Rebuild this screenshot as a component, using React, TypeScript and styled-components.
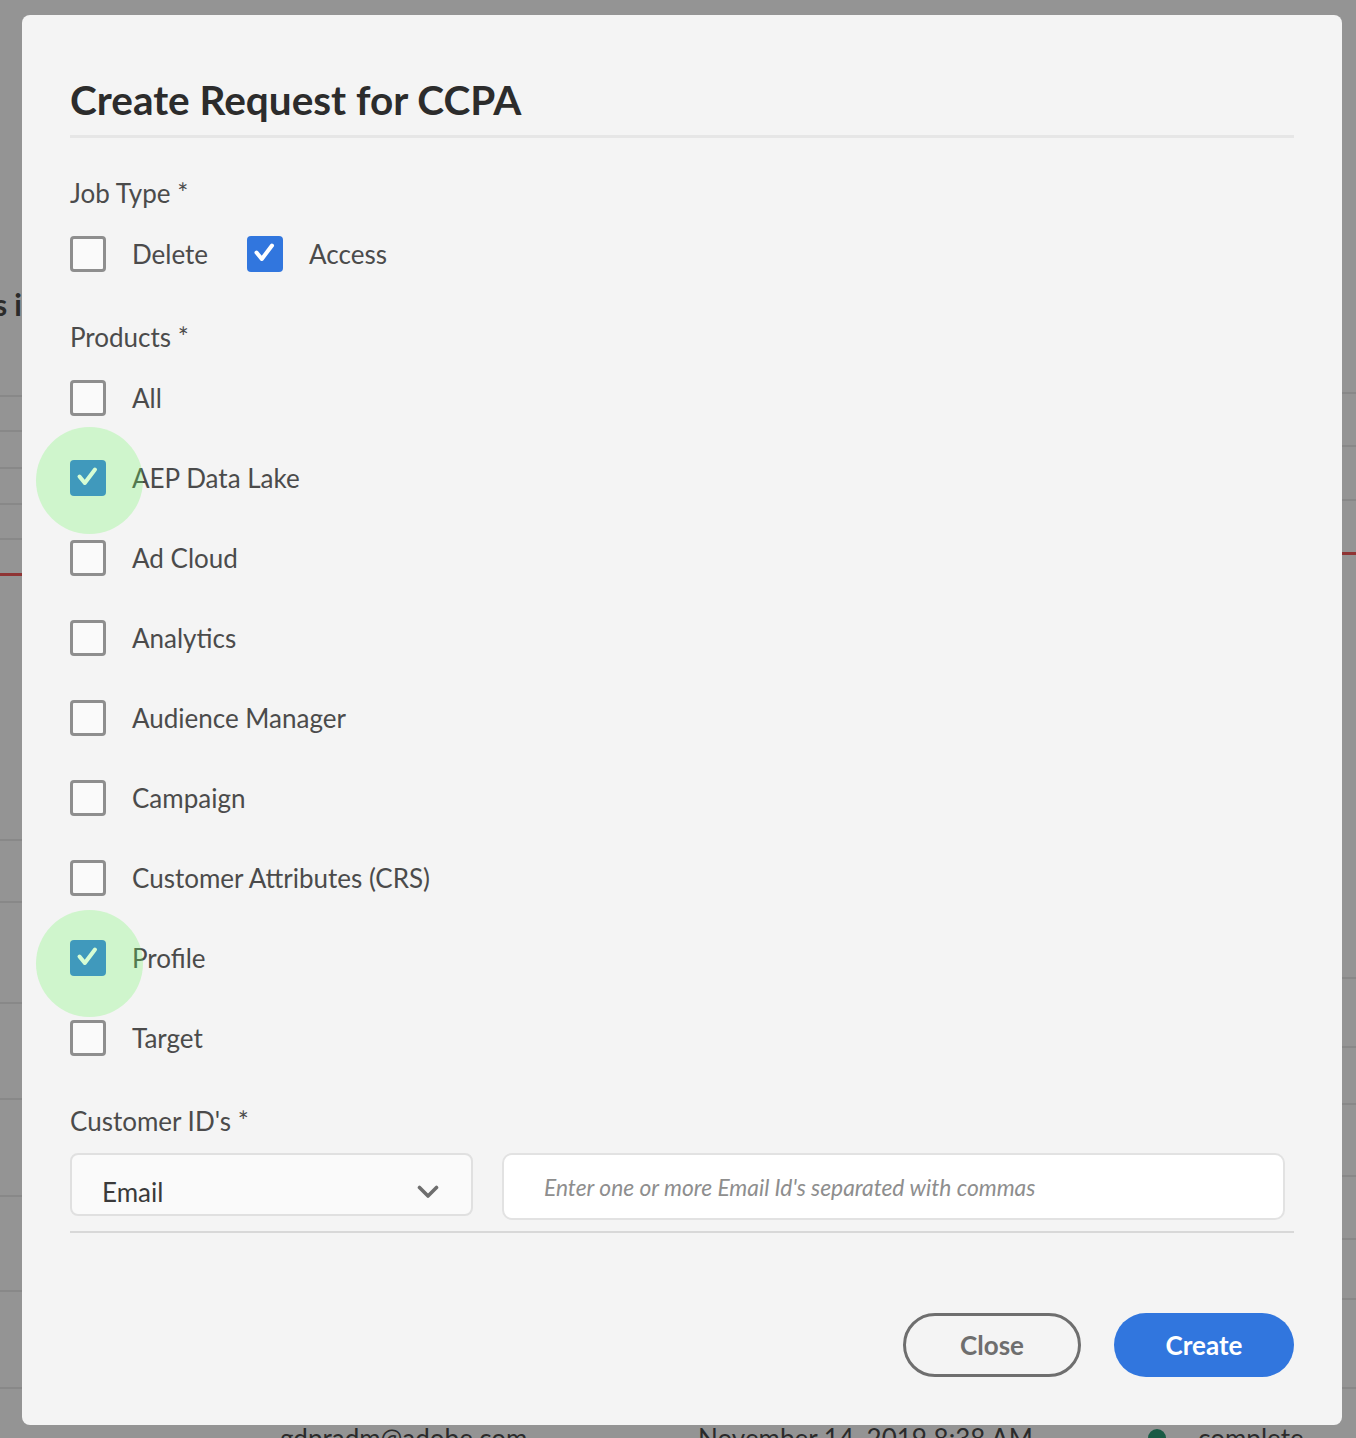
import React from "react";
import styled, { createGlobalStyle } from "styled-components";

const GlobalStyle = createGlobalStyle`
  html, body {
    margin: 0;
    padding: 0;
  }
  body {
    font-family: "Lato", "Liberation Sans", sans-serif;
    background: #ffffff;
    overflow: hidden;
  }
  * {
    box-sizing: border-box;
  }
`

// page behind the dialog (only its edges show through the overlay)
const Page = styled.div`
  width: 1356px;
  height: 1438px;
  overflow: hidden;
  display: flex;
  flex-direction: column;
`
const Panes = styled.div`
  display: flex;
  height: 1412px;
  flex-shrink: 0;
`
const Pane = styled.div<{ $width?: number }>`
  ${props => props.$width ? `width: ${props.$width}px;` : 'flex: 1;'}
  display: flex;
  flex-direction: column;
  overflow: hidden;
`
const PaneHeading = styled.div`
  height: 322px;
  display: flex;
  align-items: flex-end;
  justify-content: flex-end;
  white-space: nowrap;
  overflow: hidden;
  font-size: 30px;
  line-height: 36px;
  font-weight: 700;
  color: #4b4b4b;
  padding-right: 658px;
`
const PaneRow = styled.div<{ $h: number; $red?: boolean }>`
  height: ${props => props.$h}px;
  flex-shrink: 0;
  border-bottom: ${props => props.$red ? '3px solid #f65b5b' : '2px solid #eaeaea'};
`
const DataRow = styled.div`
  display: grid;
  grid-template-columns: 280px 418px 448px 1fr;
  align-items: center;
  padding-top: 10px;
  font-size: 26px;
  line-height: 32px;
  color: #4b4b4b;
`
const Status = styled.span`
  display: flex;
  align-items: center;
  gap: 32px;
  margin-left: 2px;
`
const Dot = styled.span`
  width: 18px;
  height: 18px;
  border-radius: 50%;
  background: #2d9d78;
`

// dialog
const Overlay = styled.div`
  position: fixed;
  inset: 0;
  background: rgba(0, 0, 0, 0.42);
  padding: 15px 14px 0 22px;
`
const Modal = styled.div`
  width: 1320px;
  height: 1410px;
  background: #f4f4f4;
  border-radius: 8px;
  padding: 61px 48px 48px;
  display: flex;
  flex-direction: column;
`
const Title = styled.h1`
  margin: 0;
  font-size: 40.5px;
  line-height: 48px;
  font-weight: 700;
  color: #2c2c2c;
`
const Divider = styled.div`
  height: 3px;
  margin-top: 11px;
  background: #e6e6e6;
`
const Label = styled.div<{ $gap: number }>`
  margin-top: ${props => props.$gap}px;
  font-size: 26px;
  line-height: 32px;
  color: #4b4b4b;
`
const InlineGroup = styled.div`
  margin-top: 27px;
  display: flex;
  align-items: center;
  gap: 39px;
`
const ProductList = styled.div`
  margin-top: 27px;
  display: flex;
  flex-direction: column;
  gap: 44px;
`
const Option = styled.label`
  position: relative;
  display: flex;
  align-items: center;
  gap: 26px;
  height: 36px;
  font-size: 26px;
  line-height: 32px;
  color: #4b4b4b;
`
const Box = styled.span<{ $checked: boolean }>`
  width: 36px;
  height: 36px;
  border-radius: 4px;
  display: flex;
  align-items: center;
  justify-content: center;
  background: ${props => props.$checked ? '#3176de' : '#fafafa'};
  border: ${props => props.$checked ? 'none' : '3px solid #8e8e8e'};
`
const Touch = styled.span<{ $top: number }>`
  position: absolute;
  left: -34px;
  top: ${props => props.$top}px;
  width: 107px;
  height: 107px;
  border-radius: 50%;
  background: rgba(109, 248, 96, 0.27);
  pointer-events: none;
`
const FieldRow = styled.div`
  margin-top: 16px;
  display: flex;
  align-items: flex-start;
  gap: 29px;
  padding-right: 9px;
`
const Select = styled.div`
  width: 403px;
  height: 63px;
  flex-shrink: 0;
  border: 2px solid #e0e0e0;
  border-radius: 8px;
  background: #fafafa;
  display: flex;
  align-items: center;
  justify-content: space-between;
  padding: 15px 32px 0 30px;
  font-size: 26px;
  color: #3a3a3a;
`
const TextInput = styled.input`
  flex: 1;
  height: 67px;
  border: 2px solid #e2e2e2;
  border-radius: 10px;
  background: #ffffff;
  padding: 0 0 0 40px;
  font-family: "Lato", "Liberation Sans", sans-serif;
  font-size: 22.8px;
  outline: none;

  &::placeholder {
    color: #8e8e8e;
    font-style: italic;
  }
`
const Rule = styled.div`
  height: 2px;
  margin-top: 11px;
  background: #d8d8d8;
`
const Footer = styled.div`
  margin-top: 80px;
  display: flex;
  justify-content: flex-end;
  gap: 33px;
`
const Button = styled.button<{ $primary?: boolean }>`
  height: 64px;
  width: ${props => props.$primary ? 180 : 178}px;
  border-radius: 32px;
  font-family: "Lato", "Liberation Sans", sans-serif;
  font-size: 26px;
  font-weight: 700;
  cursor: pointer;
  background: ${props => props.$primary ? '#3176de' : 'transparent'};
  color: ${props => props.$primary ? '#ffffff' : '#6e6e6e'};
  border: ${props => props.$primary ? 'none' : '3px solid #6e6e6e'};
`

const leftLines = [397, 432, 469, 505, 540, 576, 841, 903, 1004, 1100, 1197, 1292, 1389]
const rightLines = [394, 447, 501, 555, 979, 1048, 1105, 1177, 1240, 1300, 1389]

const toHeights = (lines: number[], start: number) =>
  lines.map((y, i) => y - (i === 0 ? start : lines[i - 1]))

const Check = () => (
  <svg width="36" height="36" viewBox="0 0 36 36">
    <path d="M9.5 16.5 L14.8 23 L25 9.5" fill="none" stroke="#ffffff" strokeWidth="4"
          strokeLinecap="round" strokeLinejoin="round"/>
  </svg>
)

const Chevron = () => (
  <svg width="22" height="14" viewBox="0 0 22 14">
    <path d="M2.5 2.5 L11 11 L19.5 2.5" fill="none" stroke="#6e6e6e" strokeWidth="3.6"
          strokeLinecap="round" strokeLinejoin="round"/>
  </svg>
)

type ProductType = { name: string, checked: boolean, touch?: number }

const products: ProductType[] = [
  {name: 'All', checked: false},
  {name: 'AEP Data Lake', checked: true, touch: -33},
  {name: 'Ad Cloud', checked: false},
  {name: 'Analytics', checked: false},
  {name: 'Audience Manager', checked: false},
  {name: 'Campaign', checked: false},
  {name: 'Customer Attributes (CRS)', checked: false},
  {name: 'Profile', checked: true, touch: -30},
  {name: 'Target', checked: false},
]

const Checkbox = ({name, checked, touch}: ProductType) => (
  <Option>
    <Box $checked={checked}>{checked && <Check/>}</Box>
    <span>{name}</span>
    {touch !== undefined && <Touch $top={touch}/>}
  </Option>
)

export default function App() {
  const leftHeights = toHeights(leftLines, 322)
  const rightHeights = toHeights(rightLines, 0)

  return (
    <>
      <GlobalStyle/>
      <Page>
        <Panes>
          <Pane $width={680}>
            <PaneHeading>Privacy requests i</PaneHeading>
            {leftHeights.map((h, i) => <PaneRow key={i} $h={h} $red={leftLines[i] === 576}/>)}
          </Pane>
          <Pane>
            {rightHeights.map((h, i) => <PaneRow key={i} $h={h} $red={rightLines[i] === 555}/>)}
          </Pane>
        </Panes>
        <DataRow>
          <span/>
          <span>gdpradm@adobe.com</span>
          <span>November 14, 2019 8:38 AM</span>
          <Status><Dot/>complete</Status>
        </DataRow>
      </Page>

      <Overlay>
        <Modal>
          <Title>Create Request for CCPA</Title>
          <Divider/>

          <Label $gap={39}>Job Type *</Label>
          <InlineGroup>
            <Checkbox name="Delete" checked={false}/>
            <Checkbox name="Access" checked={true}/>
          </InlineGroup>

          <Label $gap={49}>Products *</Label>
          <ProductList>
            {products.map(p => <Checkbox key={p.name} {...p}/>)}
          </ProductList>

          <Label $gap={49}>Customer ID's *</Label>
          <FieldRow>
            <Select>
              <span>Email</span>
              <Chevron/>
            </Select>
            <TextInput placeholder="Enter one or more Email Id's separated with commas"/>
          </FieldRow>
          <Rule/>

          <Footer>
            <Button>Close</Button>
            <Button $primary>Create</Button>
          </Footer>
        </Modal>
      </Overlay>
    </>
  )
}
